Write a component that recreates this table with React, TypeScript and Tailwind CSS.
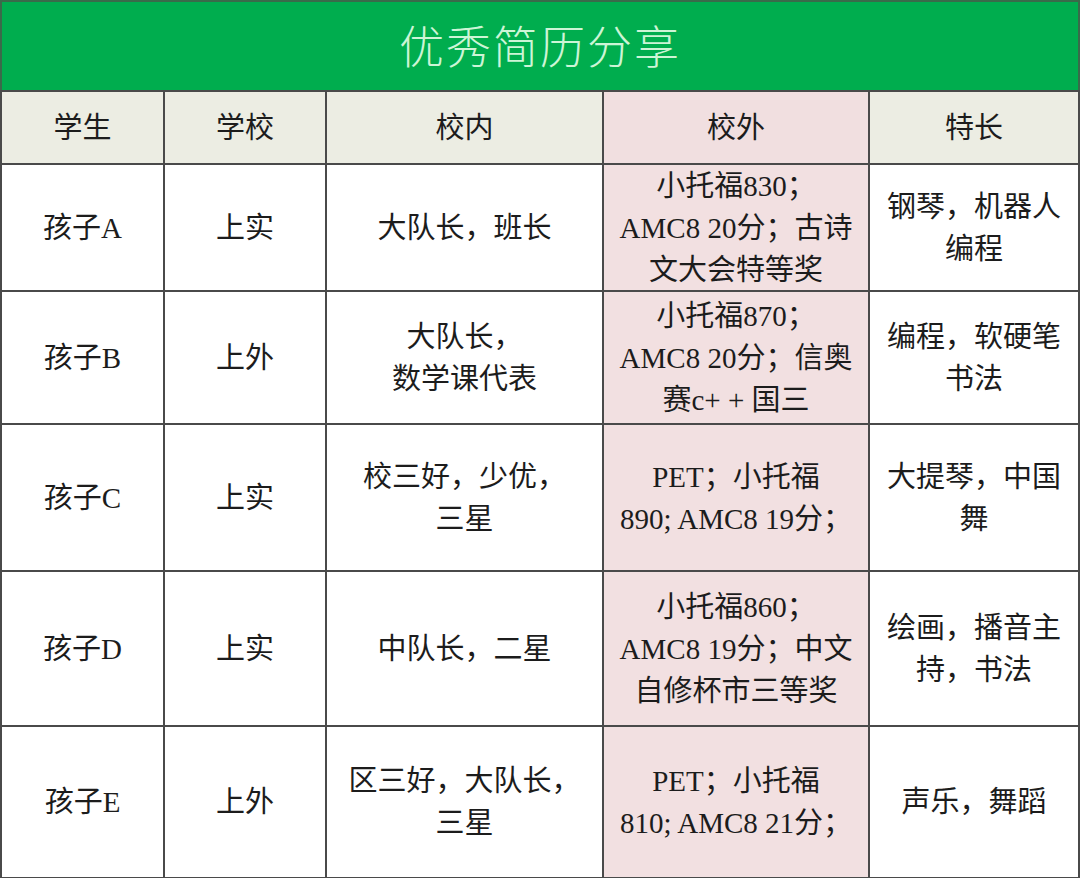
import React from "react";

type Row = {
  name: string;
  school: string;
  inside: string[];
  outside: string[];
  talent: string[];
  h: string;
};

const rows: Row[] = [
  {
    name: "孩子A",
    school: "上实",
    inside: ["大队长，班长"],
    outside: ["小托福830；", "AMC8 20分；古诗", "文大会特等奖"],
    talent: ["钢琴，机器人", "编程"],
    h: "h-[127px]",
  },
  {
    name: "孩子B",
    school: "上外",
    inside: ["大队长，", "数学课代表"],
    outside: ["小托福870；", "AMC8 20分；信奥", "赛c+ + 国三"],
    talent: ["编程，软硬笔", "书法"],
    h: "h-[133px]",
  },
  {
    name: "孩子C",
    school: "上实",
    inside: ["校三好，少优，", "三星"],
    outside: ["PET；小托福", "890; AMC8 19分；"],
    talent: ["大提琴，中国", "舞"],
    h: "h-[147px]",
  },
  {
    name: "孩子D",
    school: "上实",
    inside: ["中队长，二星"],
    outside: ["小托福860；", "AMC8 19分；中文", "自修杯市三等奖"],
    talent: ["绘画，播音主", "持，书法"],
    h: "h-[155px]",
  },
  {
    name: "孩子E",
    school: "上外",
    inside: ["区三好，大队长，", "三星"],
    outside: ["PET；小托福", "810; AMC8 21分；"],
    talent: ["声乐，舞蹈"],
    h: "h-[152px]",
  },
];

const cell =
  "flex flex-col items-center justify-center border-r-2 border-b-2 border-[#4a4a4a] text-center text-[29px] leading-[42px] text-[#1c1c1c]";

function Lines({ lines }: { lines: string[] }) {
  return (
    <>
      {lines.map((l, i) => (
        <span key={i} className="whitespace-nowrap">
          {l}
        </span>
      ))}
    </>
  );
}

export default function App() {
  return (
    <div
      className="h-[878px] w-[1080px] overflow-hidden bg-white"
      style={{ fontFamily: '"Liberation Serif", "Noto Sans CJK SC", serif' }}
    >
      <div className="flex h-[90px] items-center justify-center border-2 border-b-0 border-[#3a6a4a] bg-[#00ad4e] pb-[3px]">
        <h1
          className="text-[45px] font-light tracking-[2px] text-[#cdf5d6]"
          style={{ fontFamily: '"Noto Sans CJK SC", sans-serif' }}
        >
          优秀简历分享
        </h1>
      </div>
      <div className="grid w-[1080px] grid-cols-[163px_162px_277px_266px_210px] border-t-2 border-l-2 border-[#4a4a4a]">
        <div className={`${cell} h-[73px] bg-[#ecede3]`}>学生</div>
        <div className={`${cell} h-[73px] bg-[#ecede3]`}>学校</div>
        <div className={`${cell} h-[73px] bg-[#ecede3]`}>校内</div>
        <div className={`${cell} h-[73px] bg-[#f1dfe0]`}>校外</div>
        <div className={`${cell} h-[73px] bg-[#ecede3]`}>特长</div>
        {rows.map((r) => (
          <React.Fragment key={r.name}>
            <div className={`${cell} ${r.h}`}>{r.name}</div>
            <div className={`${cell} ${r.h}`}>{r.school}</div>
            <div className={`${cell} ${r.h}`}>
              <Lines lines={r.inside} />
            </div>
            <div className={`${cell} ${r.h} bg-[#f2e0e1]`}>
              <Lines lines={r.outside} />
            </div>
            <div className={`${cell} ${r.h}`}>
              <Lines lines={r.talent} />
            </div>
          </React.Fragment>
        ))}
      </div>
    </div>
  );
}
